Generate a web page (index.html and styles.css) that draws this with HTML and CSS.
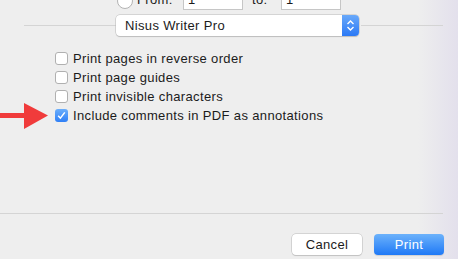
FILE: index.html
```html
<!DOCTYPE html>
<html lang="en">

<head>
    <meta charset="UTF-8">
    <meta name="viewport" content="width=device-width, initial-scale=1.0">
    <title>Print</title>
    <link rel="stylesheet" href="styles.css">
</head>

<body>
    <div class="sheet">
        <div class="range-row">
            <span class="radio"></span>
            <span class="range-label from">From:</span>
            <input class="range-input" type="text" value="1">
            <span class="range-label to">to:</span>
            <input class="range-input" type="text" value="1">
        </div>

        <div class="app-row">
            <span class="rule rule-left"></span>
            <div class="popup">
                <span class="popup-text">Nisus Writer Pro</span>
                <span class="stepper">
                    <svg width="9" height="13" viewBox="0 0 9 13">
                        <path d="M1.5 5 L4.5 2 L7.5 5 M1.5 8 L4.5 11 L7.5 8" fill="none" stroke="#fff" stroke-width="1.4"/>
                    </svg>
                </span>
            </div>
            <span class="rule rule-right"></span>
        </div>

        <div class="options">
            <label class="option"><span class="box"></span>Print pages in reverse order</label>
            <label class="option"><span class="box"></span>Print page guides</label>
            <label class="option"><span class="box"></span>Print invisible characters</label>
            <label class="option">
                <svg class="arrow" width="50" height="28" viewBox="0 0 50 28">
                    <polygon points="0,10 24,10 24,0 48,12.5 24,26 24,15 0,15" fill="#f03b3b"/>
                </svg>
                <span class="box checked">
                    <svg width="13" height="13" viewBox="0 0 13 13">
                        <path d="M3.2 6.8 L5.4 9.2 L9.8 3.4" fill="none" stroke="#fff" stroke-width="1.5"/>
                    </svg>
                </span>Include comments in PDF as annotations
            </label>
        </div>

        <div class="divider"></div>

        <div class="actions">
            <button class="btn btn-cancel">Cancel</button>
            <button class="btn btn-print">Print</button>
        </div>
    </div>
</body>

</html>
```

FILE: styles.css
```css
* {
    margin: 0;
    padding: 0;
    box-sizing: border-box;
}

body {
    width: 458px;
    height: 259px;
    overflow: hidden;
    font-family: 'Liberation Sans', Arial, sans-serif;
    font-size: 13px;
    letter-spacing: 0.35px;
    color: #1b1b1b;
    background: linear-gradient(to right, #eeeeee 0, #eeeeee 418px, #e3e0ec 458px);
}

.sheet {
    display: flex;
    flex-direction: column;
}

/* page range row, cut off by the top edge */
.range-row {
    display: flex;
    align-items: flex-end;
    height: 22px;
    margin-top: -12px;
    padding-left: 117px;
}

.radio {
    width: 16px;
    height: 16px;
    border: 1px solid #b3b3b3;
    border-radius: 50%;
    background-color: #fff;
    margin-bottom: 1px;
}

.range-label {
    line-height: 16px;
    margin-bottom: 2px;
}

.range-label.from {
    width: 50px;
    padding-left: 4px;
}

.range-label.to {
    width: 38px;
    padding-left: 9px;
}

.range-input {
    width: 60px;
    height: 22px;
    border: 1px solid #c6c6c6;
    background-color: #fff;
    font-family: 'Liberation Sans', Arial, sans-serif;
    font-size: 13px;
    padding: 0 4px;
    color: #1b1b1b;
    outline: none;
}

/* application popup */
.app-row {
    display: flex;
    align-items: center;
    margin-top: 5px;
    padding-left: 24px;
}

.rule {
    height: 1px;
    background-color: #d4d4d4;
}

.rule-left {
    width: 92px;
}

.rule-right {
    width: 82px;
    margin-left: 2px;
}

.popup {
    display: flex;
    align-items: stretch;
    width: 243px;
    height: 21px;
    background-color: #fff;
    border-radius: 4px;
    box-shadow: 0 0 0 0.5px #b9b9b9, 0 1px 1px rgba(0, 0, 0, 0.18);
}

.popup-text {
    flex: 1;
    line-height: 21px;
    padding-left: 9px;
}

.stepper {
    width: 17px;
    display: flex;
    align-items: center;
    justify-content: center;
    border-radius: 0 4px 4px 0;
    background: linear-gradient(to bottom, #69a9fa, #2b79f5);
}

/* checkbox options */
.options {
    display: flex;
    flex-direction: column;
    margin-top: 13px;
    padding-left: 55px;
}

.option {
    position: relative;
    display: flex;
    align-items: center;
    height: 19px;
}

.box {
    width: 13px;
    height: 13px;
    margin-right: 5px;
    border: 1px solid #b0b0b0;
    border-radius: 3px;
    background-color: #fff;
    display: flex;
}

.box.checked {
    border: none;
    background: linear-gradient(to bottom, #6aaefb, #2f7ff6);
}

.arrow {
    position: absolute;
    left: -55px;
    top: -3px;
}

.divider {
    height: 1px;
    width: 443px;
    margin-top: 88px;
    background-color: #d4d4d4;
}

/* buttons */
.actions {
    display: flex;
    gap: 12px;
    margin-top: 20px;
    padding-left: 292px;
}

.btn {
    width: 70px;
    height: 21px;
    border: none;
    border-radius: 4px;
    font-family: 'Liberation Sans', Arial, sans-serif;
    font-size: 13px;
    letter-spacing: 0.35px;
}

.btn-cancel {
    background-color: #fff;
    color: #1b1b1b;
    box-shadow: 0 0 0 0.5px #b9b9b9, 0 1px 1px rgba(0, 0, 0, 0.15);
}

.btn-print {
    color: #fff;
    background: linear-gradient(to bottom, #6cb2fb, #1f79f6);
    box-shadow: 0 1px 1px rgba(0, 0, 0, 0.12);
}
```
